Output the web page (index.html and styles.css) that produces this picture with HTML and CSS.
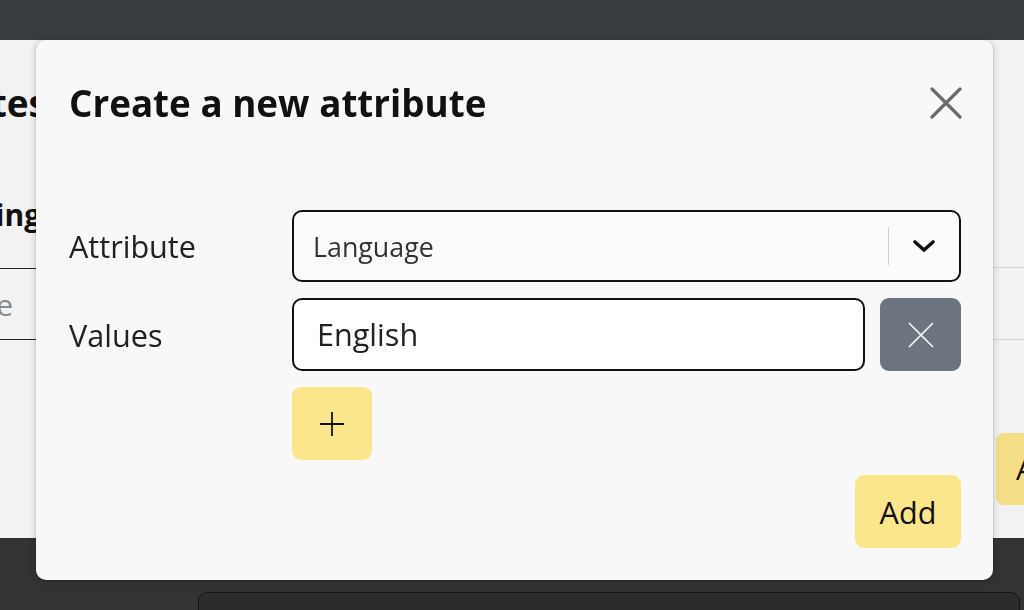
FILE: index.html
```html
<!DOCTYPE html>
<html lang="en">
<head>
<meta charset="utf-8">
<title>Create a new attribute</title>
<link rel="stylesheet" href="styles.css">
</head>
<body>
<div class="topbar"></div>
<div class="page">
  <div class="left-col">
    <div class="clip-row heading-row"><h1 class="bg-title">Attributes</h1></div>
    <div class="clip-row sub-row"><h2 class="bg-sub">Settings</h2></div>
    <div class="clip-row bg-input"><span class="bg-placeholder">Name</span></div>
  </div>
  <div class="spacer"></div>
  <div class="right-col">
    <div class="bg-table-row"></div>
    <div class="bg-btn">Add</div>
  </div>
</div>
<div class="footer"><div class="footer-box"></div></div>

<div class="modal" role="dialog" aria-labelledby="modal-title">
  <div class="modal-header">
    <h2 id="modal-title" class="modal-title">Create a new attribute</h2>
    <button class="close-btn" aria-label="Close">
      <svg width="32" height="32" viewBox="0 0 32 32"><path d="M2 2 L30 30 M30 2 L2 30" stroke="#6b6b6b" stroke-width="3.2" stroke-linecap="round" fill="none"/></svg>
    </button>
  </div>
  <div class="form">
    <div class="label">Attribute</div>
    <div class="select">
      <span class="select-value">Language</span>
      <span class="select-sep"></span>
      <span class="select-arrow">
        <svg width="24" height="14" viewBox="0 0 24 14"><path d="M3 3 L12 11 L21 3" stroke="#111" stroke-width="3.6" stroke-linecap="round" stroke-linejoin="round" fill="none"/></svg>
      </span>
    </div>
    <div class="label">Values</div>
    <div class="value-row">
      <div class="text-input">English</div>
      <button class="remove-btn" aria-label="Remove">
        <svg width="26" height="26" viewBox="0 0 26 26"><path d="M1 1 L25 25 M25 1 L1 25" stroke="#fff" stroke-width="1.6" fill="none"/></svg>
      </button>
    </div>
    <div></div>
    <div class="plus-row">
      <button class="plus-btn" aria-label="Add value">
        <svg width="24" height="24" viewBox="0 0 24 24"><path d="M12 0 L12 24 M0 12 L24 12" stroke="#111" stroke-width="1.8" fill="none"/></svg>
      </button>
    </div>
  </div>
  <div class="modal-footer">
    <button class="add-btn">Add</button>
  </div>
</div>
</body>
</html>
```

FILE: styles.css
```css
* { box-sizing: border-box; }
html, body {
  margin: 0;
  padding: 0;
  width: 1024px;
  height: 610px;
  overflow: hidden;
  font-family: "Open Sans", "Noto Sans", sans-serif;
  color: #222;
}
button {
  font-family: inherit;
  border: none;
  padding: 0;
  margin: 0;
  cursor: pointer;
}
.topbar {
  height: 40px;
  background: #3a3d40;
}
.page {
  height: 498px;
  background: #f2f2f2;
  display: flex;
}
.left-col {
  width: 37px;
  overflow: hidden;
}
.clip-row {
  display: flex;
  justify-content: flex-end;
  white-space: nowrap;
}
.heading-row { margin-top: 38px; width: 47px; }
.bg-title {
  margin: 0;
  font-size: 37px;
  line-height: 49px;
  font-weight: 700;
  color: #111;
}
.sub-row { margin-top: 69px; width: 56px; }
.bg-sub {
  margin: 0;
  font-size: 30px;
  line-height: 38px;
  font-weight: 700;
  color: #111;
}
.bg-input {
  margin-top: 34px;
  height: 72px;
  border-top: 1px solid #222;
  border-bottom: 1px solid #222;
  align-items: center;
  justify-content: flex-end;
  width: 37px;
}
.bg-placeholder {
  font-size: 30px;
  color: #8a8a8a;
  margin-right: 24px;
}
.spacer { flex: 1; }
.right-col {
  width: 31px;
  overflow: hidden;
}
.bg-table-row {
  margin-top: 227px;
  height: 73px;
  border-top: 1px solid #d4d4d4;
  border-bottom: 1px solid #d4d4d4;
}
.bg-btn {
  margin: 93px 0 0 3px;
  width: 80px;
  height: 72px;
  border-radius: 8px;
  background: #f5df86;
  font-size: 30px;
  line-height: 72px;
  padding-left: 20px;
  color: #111;
}
.footer {
  height: 72px;
  background: #333;
  padding: 54px 4px 0 198px;
}
.footer-box {
  height: 40px;
  border: 1.5px solid #161616;
  border-radius: 9px;
  background: #2c2c2c;
}

.modal {
  position: fixed;
  left: 36px;
  top: 40px;
  width: 957px;
  height: 540px;
  background: #f8f8f8;
  border-radius: 10px;
  box-shadow: 0 1px 2px rgba(0,0,0,0.25), 0 0 8px rgba(0,0,0,0.18);
  padding: 32px 32px 32px 33px;
  display: flex;
  flex-direction: column;
}
.modal-header {
  height: 62px;
  display: flex;
  align-items: center;
  justify-content: space-between;
}
.modal-title {
  margin: 0;
  font-size: 36.8px;
  font-weight: 700;
  color: #111;
  line-height: 49px;
}
.close-btn {
  background: none;
  width: 32px;
  height: 32px;
  display: flex;
  align-items: center;
  justify-content: center;
  margin-right: -1px;
}
.form {
  margin-top: 76px;
  display: grid;
  grid-template-columns: 223px 1fr;
  row-gap: 16px;
  align-items: center;
}
.label {
  font-size: 30.6px;
  color: #222;
}
.select {
  height: 72px;
  border: 2px solid #111;
  border-radius: 10px;
  background: #fbfbfb;
  display: flex;
  align-items: center;
  padding-left: 19px;
}
.select-value {
  flex: 1;
  font-size: 26.8px;
  color: #333;
}
.select-sep {
  width: 1px;
  height: 38px;
  background: #cfcfcf;
}
.select-arrow {
  width: 70px;
  display: flex;
  justify-content: center;
  align-items: center;
}
.value-row {
  display: flex;
  gap: 15px;
}
.text-input {
  flex: 1;
  height: 73px;
  border: 2px solid #111;
  border-radius: 10px;
  background: #fff;
  font-size: 30.6px;
  line-height: 69px;
  padding-left: 23px;
  color: #222;
}
.remove-btn {
  width: 81px;
  height: 73px;
  border-radius: 9px;
  background: #6c757d;
  display: flex;
  align-items: center;
  justify-content: center;
}
.plus-btn {
  width: 80px;
  height: 73px;
  border-radius: 9px;
  background: #fce68c;
  display: flex;
  align-items: center;
  justify-content: center;
}
.modal-footer {
  margin-top: 15px;
  display: flex;
  justify-content: flex-end;
}
.add-btn {
  width: 106px;
  height: 73px;
  border-radius: 9px;
  background: #fce68c;
  font-size: 30.6px;
  color: #111;
}
```
